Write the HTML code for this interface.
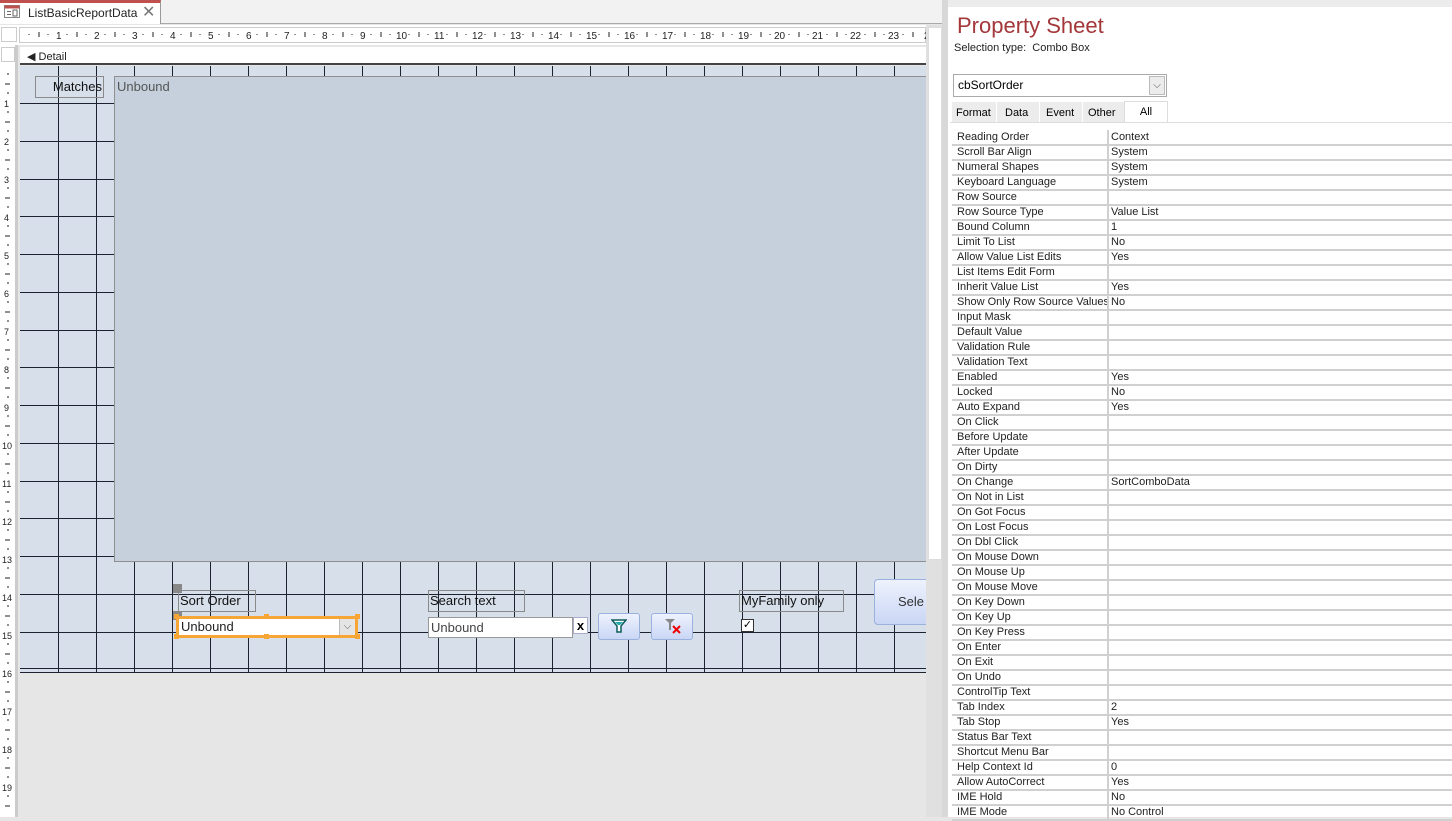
<!DOCTYPE html>
<html><head><meta charset="utf-8">
<style>
*{margin:0;padding:0;box-sizing:border-box}
body{width:1452px;height:817px;overflow:hidden;background:#e6e6e6;font-family:"Liberation Sans",sans-serif;position:relative;font-size:12px}
.abs{position:absolute}
.ps td{height:15px;font-size:11px;color:#222;padding-left:5px;border-bottom:2px solid #d0d0d0;white-space:nowrap;overflow:hidden;line-height:13px}
.ps td.v{padding-left:2px}
.ps td.l{width:156px;border-right:2px solid #d0d0d0;max-width:156px}
.ps{border-collapse:collapse;position:absolute;left:952px;top:130px;width:500px;table-layout:fixed}
.lbl{position:absolute;border:1px solid #8a8a8a;font-size:13px;color:#111;padding-left:1px;line-height:19px}
</style></head><body>
<div class="abs" style="left:0;top:0;width:942px;height:24px;background:#f2f2f2;border-bottom:1px solid #aaa"></div>
<div class="abs" style="left:0;top:0;width:161px;height:24px;background:#fff;border-top:3px solid #c0504d;border-right:1px solid #999"></div>
<svg class="abs" style="left:4px;top:5px" width="16" height="13"><rect x="0.5" y="0.5" width="15" height="12" fill="#fff" stroke="#888"/><rect x="0.5" y="0.5" width="15" height="3" fill="#c0504d"/><line x1="3" y1="6.5" x2="7" y2="6.5" stroke="#666"/><line x1="3" y1="9.5" x2="7" y2="9.5" stroke="#666"/><rect x="9" y="5" width="4" height="6" fill="none" stroke="#666"/></svg>
<div class="abs" style="left:28px;top:6px;font-size:12px;color:#222">ListBasicReportData</div>
<div class="abs" style="left:142px;top:2px;font-size:16px;color:#777">✕</div>
<div class="abs" style="left:0;top:25px;width:942px;height:20px;background:#fff"></div>
<div class="abs" style="left:1px;top:27px;width:16px;height:15px;border:1px solid #ccc"></div>
<div class="abs" style="left:19px;top:27px;width:907px;height:16px;border:1px solid #ccc;font-size:9px;color:#222">
<svg width="907" height="14" style="position:absolute;left:0;top:0">
<g fill="#222" font-family="Liberation Sans" font-size="10">
<text x="36" y="11">1</text><text x="74" y="11">2</text><text x="112" y="11">3</text><text x="150" y="11">4</text><text x="188" y="11">5</text><text x="226" y="11">6</text><text x="264" y="11">7</text><text x="302" y="11">8</text><text x="340" y="11">9</text><text x="376" y="11">10</text><text x="414" y="11">11</text><text x="452" y="11">12</text><text x="490" y="11">13</text><text x="528" y="11">14</text><text x="566" y="11">15</text><text x="604" y="11">16</text><text x="642" y="11">17</text><text x="680" y="11">18</text><text x="718" y="11">19</text><text x="754" y="11">20</text><text x="792" y="11">21</text><text x="830" y="11">22</text><text x="868" y="11">23</text><text x="904" y="11">2</text>
</g>
<g stroke="#222">
<path d="M9 6v1M28 6v1M47 6v1M66 6v1M85 6v1M104 6v1M123 6v1M142 6v1M161 6v1M180 6v1M199 6v1M218 6v1M237 6v1M256 6v1M275 6v1M294 6v1M313 6v1M332 6v1M351 6v1M370 6v1M389 6v1M408 6v1M427 6v1M446 6v1M465 6v1M484 6v1M503 6v1M522 6v1M541 6v1M560 6v1M579 6v1M598 6v1M617 6v1M636 6v1M655 6v1M674 6v1M693 6v1M712 6v1M731 6v1M750 6v1M769 6v1M788 6v1M807 6v1M826 6v1M845 6v1M864 6v1M883 6v1"/>
<path d="M19 4v5M57 4v5M95 4v5M133 4v5M171 4v5M209 4v5M247 4v5M285 4v5M323 4v5M361 4v5M399 4v5M437 4v5M475 4v5M513 4v5M551 4v5M589 4v5M627 4v5M665 4v5M703 4v5M741 4v5M779 4v5M817 4v5M855 4v5M893 4v5"/>
</g></svg></div>
<div class="abs" style="left:0;top:45px;width:18px;height:772px;background:#fff;border-right:3px solid #ccc"></div>
<div class="abs" style="left:1px;top:47px;width:14px;height:15px;border:1px solid #ccc"></div>
<svg class="abs" style="left:0;top:62px" width="16" height="755"><g font-family="Liberation Sans" font-size="9" fill="#222">
<text x="4" y="45">1</text><text x="4" y="83">2</text><text x="4" y="121">3</text><text x="4" y="159">4</text><text x="4" y="197">5</text><text x="4" y="235">6</text><text x="4" y="273">7</text><text x="4" y="311">8</text><text x="4" y="349">9</text><text x="2" y="387">10</text><text x="2" y="425">11</text><text x="2" y="463">12</text><text x="2" y="501">13</text><text x="2" y="539">14</text><text x="2" y="577">15</text><text x="2" y="615">16</text><text x="2" y="653">17</text><text x="2" y="691">18</text><text x="2" y="729">19</text></g>
<g stroke="#222"><path d="M7 12h2M5 22h5M7 31h2M7 50h2M5 60h5M7 69h2M7 88h2M5 98h5M7 107h2M7 126h2M5 136h5M7 145h2M7 164h2M5 174h5M7 183h2M7 202h2M5 212h5M7 221h2M7 240h2M5 250h5M7 259h2M7 278h2M5 288h5M7 297h2M7 316h2M5 326h5M7 335h2M7 354h2M5 364h5M7 373h2M7 392h2M5 402h5M7 411h2M7 430h2M5 440h5M7 449h2M7 468h2M5 478h5M7 487h2M7 506h2M5 516h5M7 525h2M7 544h2M5 554h5M7 563h2M7 582h2M5 592h5M7 601h2M7 620h2M5 630h5M7 639h2M7 658h2M5 668h5M7 677h2M7 696h2M5 706h5M7 715h2M7 734h2M5 744h5"/></g></svg>
<div class="abs" style="left:20px;top:47px;width:906px;height:18px;background:#fff;border-bottom:2px solid #444"></div>
<div class="abs" style="left:27px;top:50px;font-size:11px;color:#222">◀ Detail</div>
<svg class="abs" style="left:20px;top:66px" width="906" height="610">
<rect width="906" height="607" fill="#d6dfea"/>
<g stroke="#1e2230" stroke-width="1">
<path d="M38.5 0v607M76.5 0v607M114.5 0v607M152.5 0v607M190.5 0v607M228.5 0v607M266.5 0v607M304.5 0v607M342.5 0v607M380.5 0v607M418.5 0v607M456.5 0v607M494.5 0v607M532.5 0v607M570.5 0v607M608.5 0v607M646.5 0v607M684.5 0v607M722.5 0v607M760.5 0v607M798.5 0v607M836.5 0v607M874.5 0v607"/>
<path d="M0 37.5h906M0 75.5h906M0 113.5h906M0 150.5h906M0 188.5h906M0 226.5h906M0 264.5h906M0 301.5h906M0 339.5h906M0 377.5h906M0 415.5h906M0 452.5h906M0 490.5h906M0 528.5h906M0 566.5h906M0 602.5h906M0 606.5h906"/>
</g></svg>
<div class="abs" style="left:20px;top:674px;width:906px;height:143px;background:#e6e6e6"></div>
<div class="abs" style="left:114px;top:76px;width:812px;height:486px;background:#c5d0dc;border:1px solid #8f8f8f;border-right:none;font-size:13px;color:#555;padding:2px 2px">Unbound</div>
<div class="lbl" style="left:35px;top:76px;width:69px;height:22px;text-align:right;padding-right:1px">Matches</div>
<div class="lbl" style="left:178px;top:590px;width:78px;height:22px">Sort Order</div>
<div class="abs" style="left:173px;top:584px;width:9px;height:9px;background:#888"></div>
<div class="abs" style="left:173px;top:611px;width:9px;height:9px;background:#888"></div>
<div class="abs" style="left:176px;top:616px;width:182px;height:22px;border:3px solid #f7a636;background:#fff;font-size:13px;color:#222;padding-left:2px;line-height:16px">Unbound</div>
<div class="abs" style="left:339px;top:619px;width:16px;height:16px;background:#e4e4e4;border-left:1px solid #bbb;color:#666;font-size:10px;text-align:center;line-height:16px">⌵</div>
<div class="abs" style="left:174px;top:614px;width:5px;height:5px;background:#f7a636"></div>
<div class="abs" style="left:264px;top:614px;width:5px;height:5px;background:#f7a636"></div>
<div class="abs" style="left:355px;top:614px;width:5px;height:5px;background:#f7a636"></div>
<div class="abs" style="left:174px;top:634px;width:5px;height:5px;background:#f7a636"></div>
<div class="abs" style="left:264px;top:634px;width:5px;height:5px;background:#f7a636"></div>
<div class="abs" style="left:355px;top:634px;width:5px;height:5px;background:#f7a636"></div>
<div class="lbl" style="left:428px;top:590px;width:97px;height:22px">Search text</div>
<div class="abs" style="left:428px;top:617px;width:145px;height:21px;border:1px solid #999;background:#fff;font-size:13px;color:#444;padding-left:2px;line-height:19px">Unbound</div>
<div class="abs" style="left:573px;top:617px;width:15px;height:17px;background:#fff;border:1px solid #aac;font-size:13px;font-weight:bold;text-align:center;line-height:15px">x</div>
<div class="abs" style="left:598px;top:613px;width:42px;height:27px;border:1px solid #9ab0dd;border-radius:3px;background:linear-gradient(#eef2fd,#c9d6f5)"></div>
<svg class="abs" style="left:611px;top:619px" width="16" height="14"><path d="M1 1h14l-5 6v6h-4v-6z" fill="#fff" stroke="#0c5c5c" stroke-width="1.5"/><path d="M4 3h8l-3 3h-2z" fill="#2aa"/></svg>
<div class="abs" style="left:651px;top:613px;width:42px;height:27px;border:1px solid #9ab0dd;border-radius:3px;background:linear-gradient(#eef2fd,#c9d6f5)"></div>
<svg class="abs" style="left:664px;top:618px" width="18" height="18"><path d="M1 1h10l-4 4v7h-2v-7z" fill="#888"/><path d="M9 8l7 7M16 8l-7 7" stroke="#e00" stroke-width="2"/></svg>
<div class="lbl" style="left:739px;top:590px;width:105px;height:22px">MyFamily only</div>
<div class="abs" style="left:741px;top:619px;width:13px;height:13px;border:1px solid #333;background:#fff;font-size:11px;line-height:11px;text-align:center">✓</div>
<div class="abs" style="left:874px;top:579px;width:60px;height:46px;border:1px solid #9ab0dd;border-radius:4px;background:linear-gradient(#eef2fd,#c9d6f5);font-size:13px;color:#333;padding:14px 0 0 23px">Sele</div>
<div class="abs" style="left:926px;top:25px;width:20px;height:792px;background:#e0e0e0"></div>
<div class="abs" style="left:928px;top:27px;width:14px;height:533px;background:#fff;border:1px solid #ddd"></div>
<div class="abs" style="left:942px;top:0;width:6px;height:817px;background:#d8d8d8"></div>
<div class="abs" style="left:948px;top:0;width:504px;height:817px;background:#fff;border-top:7px solid #ececec"></div>
<div class="abs" style="left:957px;top:13px;font-size:22px;color:#a4373a">Property Sheet</div>
<div class="abs" style="left:954px;top:42px;font-size:11px;color:#222">Selection type:&nbsp; Combo Box</div>
<div class="abs" style="left:953px;top:74px;width:214px;height:23px;border:1px solid #aaa;font-size:12px;padding:3px 0 0 4px">cbSortOrder</div>
<div class="abs" style="left:1149px;top:76px;width:16px;height:19px;background:#ececec;border:1px solid #bbb;font-size:10px;text-align:center;line-height:17px;color:#555">⌵</div>
<div class="abs" style="left:952px;top:102px;width:173px;height:20px;background:#ececec"></div>
<div class="abs" style="left:956px;top:107px;font-size:11px">Format</div>
<div class="abs" style="left:996px;top:102px;width:44px;height:20px;border-left:1px solid #fff;border-right:1px solid #fff"></div>
<div class="abs" style="left:1005px;top:107px;font-size:11px">Data</div>
<div class="abs" style="left:1046px;top:107px;font-size:11px">Event</div>
<div class="abs" style="left:1082px;top:102px;width:1px;height:20px;background:#fff"></div>
<div class="abs" style="left:1088px;top:107px;font-size:11px">Other</div>
<div class="abs" style="left:1124px;top:101px;width:44px;height:22px;background:#fff;border:1px solid #ddd;border-bottom:none;font-size:11px;text-align:center;padding-top:4px">All</div>
<div class="abs" style="left:950px;top:122px;width:502px;height:1px;background:#ddd"></div>
<table class="ps">
<tr><td class="l">Reading Order</td><td class="v">Context</td></tr>
<tr><td class="l">Scroll Bar Align</td><td class="v">System</td></tr>
<tr><td class="l">Numeral Shapes</td><td class="v">System</td></tr>
<tr><td class="l">Keyboard Language</td><td class="v">System</td></tr>
<tr><td class="l">Row Source</td><td class="v"></td></tr>
<tr><td class="l">Row Source Type</td><td class="v">Value List</td></tr>
<tr><td class="l">Bound Column</td><td class="v">1</td></tr>
<tr><td class="l">Limit To List</td><td class="v">No</td></tr>
<tr><td class="l">Allow Value List Edits</td><td class="v">Yes</td></tr>
<tr><td class="l">List Items Edit Form</td><td class="v"></td></tr>
<tr><td class="l">Inherit Value List</td><td class="v">Yes</td></tr>
<tr><td class="l">Show Only Row Source Values</td><td class="v">No</td></tr>
<tr><td class="l">Input Mask</td><td class="v"></td></tr>
<tr><td class="l">Default Value</td><td class="v"></td></tr>
<tr><td class="l">Validation Rule</td><td class="v"></td></tr>
<tr><td class="l">Validation Text</td><td class="v"></td></tr>
<tr><td class="l">Enabled</td><td class="v">Yes</td></tr>
<tr><td class="l">Locked</td><td class="v">No</td></tr>
<tr><td class="l">Auto Expand</td><td class="v">Yes</td></tr>
<tr><td class="l">On Click</td><td class="v"></td></tr>
<tr><td class="l">Before Update</td><td class="v"></td></tr>
<tr><td class="l">After Update</td><td class="v"></td></tr>
<tr><td class="l">On Dirty</td><td class="v"></td></tr>
<tr><td class="l">On Change</td><td class="v">SortComboData</td></tr>
<tr><td class="l">On Not in List</td><td class="v"></td></tr>
<tr><td class="l">On Got Focus</td><td class="v"></td></tr>
<tr><td class="l">On Lost Focus</td><td class="v"></td></tr>
<tr><td class="l">On Dbl Click</td><td class="v"></td></tr>
<tr><td class="l">On Mouse Down</td><td class="v"></td></tr>
<tr><td class="l">On Mouse Up</td><td class="v"></td></tr>
<tr><td class="l">On Mouse Move</td><td class="v"></td></tr>
<tr><td class="l">On Key Down</td><td class="v"></td></tr>
<tr><td class="l">On Key Up</td><td class="v"></td></tr>
<tr><td class="l">On Key Press</td><td class="v"></td></tr>
<tr><td class="l">On Enter</td><td class="v"></td></tr>
<tr><td class="l">On Exit</td><td class="v"></td></tr>
<tr><td class="l">On Undo</td><td class="v"></td></tr>
<tr><td class="l">ControlTip Text</td><td class="v"></td></tr>
<tr><td class="l">Tab Index</td><td class="v">2</td></tr>
<tr><td class="l">Tab Stop</td><td class="v">Yes</td></tr>
<tr><td class="l">Status Bar Text</td><td class="v"></td></tr>
<tr><td class="l">Shortcut Menu Bar</td><td class="v"></td></tr>
<tr><td class="l">Help Context Id</td><td class="v">0</td></tr>
<tr><td class="l">Allow AutoCorrect</td><td class="v">Yes</td></tr>
<tr><td class="l">IME Hold</td><td class="v">No</td></tr>
<tr><td class="l">IME Mode</td><td class="v">No Control</td></tr>
</table>
</body></html>
